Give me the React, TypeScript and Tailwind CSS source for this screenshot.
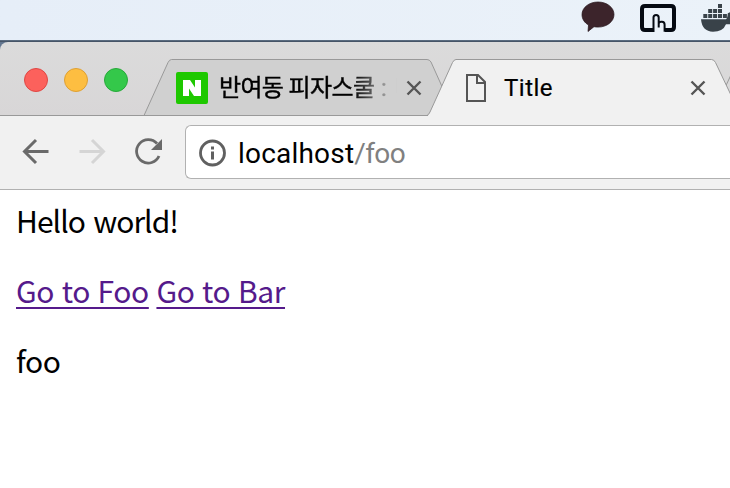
import React from "react";

function MenuBar() {
  return (
    <div className="flex h-10 shrink-0 justify-end bg-gradient-to-r from-[#e6eef8] to-[#ebf2f9]">
      <svg width="150" height="40" viewBox="580 0 150 40">
        <path d="M598 2c-9 0-16 5.600-16 12.500 0 4.600 2.600 8.300 6.500 10.500L588 31.500l6-4.800c1.300.3 2.600.4 4 .4 9 0 16-5.600 16-12.600S607 2 598 2z" fill="#3c242b" stroke="#241318" strokeWidth=".7" />
        <path d="M653 30h-8q-3 0-3-3V9q0-3 3-3h26q3 0 3 3v18q0 3-3 3h-6" fill="none" stroke="#050a12" strokeWidth="4" />
        <path d="M653.500 32V17.600q0-2.600 2.600-2.600t2.600 2.600v10M658.700 24v-.3q0-2 2.500-2h.8q2.600 0 2.600 3v7" fill="none" stroke="#050a12" strokeWidth="2" />
        <path d="M701 19.300h25q1.500-1 1.800-6l2.200-1v12h-4q-3 7.500-13 7.500-11-.5-12-12.500z" fill="#394249" />
        <g fill="#394249">
          <rect x="703.300" y="14" width="4" height="4" />
          <rect x="708.200" y="14" width="4" height="4" />
          <rect x="713.100" y="14" width="4" height="4" />
          <rect x="718" y="14" width="4" height="4" />
          <rect x="722.900" y="14" width="4" height="4" />
          <rect x="708.200" y="9" width="4" height="4" />
          <rect x="713.100" y="9" width="4" height="4" />
          <rect x="718" y="9" width="4" height="4" />
          <rect x="718" y="4" width="4" height="4" />
        </g>
      </svg>
    </div>
  );
}

function CloseIcon() {
  return (
    <svg width="16" height="16" viewBox="0 0 16 16" className="shrink-0">
      <path d="M1.500 1.500l13 13M14.500 1.500l-13 13" stroke="#555" strokeWidth="2.400" />
    </svg>
  );
}

function TabShapes() {
  return (
    <svg className="absolute left-0 top-0" width="730" height="74" viewBox="0 42 730 74">
      <path d="M718 115.500L740 70v45.500z" fill="#cfcfcf" />
      <path d="M726 85.500l8-17" stroke="#999" fill="none" />
      <path d="M144 115.500L168 62.500Q169.500 59.500 171.500 59.500H427Q429.500 59.500 431 62L455 115.500z" fill="#d0d0d0" stroke="#999" />
      <path d="M0 115.500H730" stroke="#999" />
      <path d="M428 116V115.500Q429 114.500 430 112L452.500 62.500Q454 59.500 456 59.500H711.500Q714 59.500 715.500 62.500L739.500 113V116z" fill="#f1f1f1" />
      <path d="M427 115.500Q428.500 115 430 112L452.500 62.500Q454 59.500 456 59.500H711.500Q714 59.500 715.500 62.500L739.500 113" fill="none" stroke="#999" />
    </svg>
  );
}

function TabStrip() {
  return (
    <div className="shrink-0 bg-[#61758f]">
      <div className="relative h-[74px] overflow-hidden rounded-tl-[8px] bg-gradient-to-b from-[#dbdbdb] to-[#d8d6d7]">
        <TabShapes />
        <div className="relative flex h-full items-center pl-6 pt-[3px] font-['Roboto','Noto_Sans_CJK_KR',sans-serif] text-[24px] text-black">
          <div className="flex w-[152px] shrink-0 gap-4 self-start pt-[23px]">
            <div className="size-6 rounded-full border border-[#df4744] bg-[#fc615c]" />
            <div className="size-6 rounded-full border border-[#dea034] bg-[#fdbe41]" />
            <div className="size-6 rounded-full border border-[#27a93a] bg-[#34c84a]" />
          </div>
          <div className="flex w-[290px] shrink-0 items-center pt-[15px]">
            <svg width="32" height="32" viewBox="0 0 32 32" className="shrink-0">
              <rect width="32" height="32" rx="2" fill="#1ec800" />
              <path d="M7 8h7l5 7.500V8h6v16h-7l-5-7.500V24H7z" fill="#fff" />
            </svg>
            <div className="ml-[11px] mb-[1px] w-[178px] overflow-hidden whitespace-nowrap leading-9 tracking-[-0.65px] [-webkit-text-stroke:0.4px_black] [mask-image:linear-gradient(to_right,black_75%,transparent)]">
              반여동 피자스쿨<span className="tracking-[0.8px]"> : </span>네
            </div>
            <div className="ml-[9px]"><CloseIcon /></div>
          </div>
          <div className="flex w-[240px] shrink-0 items-center pt-[15px]">
            <svg width="20" height="28" viewBox="0 0 20 28" className="shrink-0">
              <path d="M1 1h11l7 7v19H1zM11 1v8h8" fill="none" stroke="#555" strokeWidth="2" />
            </svg>
            <div className="mb-[1px] ml-[18px] w-[186px] leading-9 tracking-[0.5px] [-webkit-text-stroke:0.2px_black]">Title</div>
            <CloseIcon />
          </div>
        </div>
      </div>
    </div>
  );
}

function Toolbar() {
  return (
    <div className="flex h-[74px] shrink-0 items-center border-b border-[#b1b1b1] bg-[#f1f1f1]">
      <svg width="185" height="73" viewBox="0 116 185 73" className="shrink-0">
        <path d="M48.500 151.500H24.500M36 140L24.500 151.500L36 163" fill="none" stroke="#6a6a6a" strokeWidth="3" />
        <path d="M79.500 151.500H103.500M92 140L103.500 151.500L92 163" fill="none" stroke="#d5d5d5" strokeWidth="3" />
        <path d="M157 143.500A11.700 11.700 0 1 0 159 156" fill="none" stroke="#6a6a6a" strokeWidth="2.800" />
        <path d="M162 139v11h-11z" fill="#6a6a6a" />
      </svg>
      <div className="mb-[1px] flex h-[54px] grow items-center rounded-l-md border border-r-0 border-[#b1b1b1] bg-white pl-3">
        <svg width="28" height="28" viewBox="0 0 28 28" className="mt-[1px] shrink-0">
          <circle cx="14.500" cy="14" r="12" fill="none" stroke="#606060" strokeWidth="2.800" />
          <path d="M14.500 7.500v3M14.500 12.500v8" stroke="#606060" strokeWidth="3" />
        </svg>
        <div className="ml-3 mt-[3px] font-['Roboto',sans-serif] text-[28px] leading-9 tracking-[0.2px] text-black">
          localhost<span className="tracking-[-0.6px] text-[#808080]">/foo</span>
        </div>
      </div>
    </div>
  );
}

export default function App() {
  return (
    <div className="flex h-[488px] w-[730px] flex-col overflow-hidden bg-white">
      <MenuBar />
      <div className="h-[2px] shrink-0 bg-gradient-to-b from-[#64768b] to-[#3c4a5c]" />
      <TabStrip />
      <Toolbar />
      <main className="flex flex-col gap-8 whitespace-nowrap px-4 pt-[11px] font-['Noto_Sans_CJK_KR',sans-serif] text-[30px] leading-[38px] text-black">
        <p className="tracking-[-0.95px] [word-spacing:2.5px]">Hello world!</p>
        <p className="tracking-[-0.4px] text-[#551a8b] [word-spacing:1.3px]">
          <a className="underline decoration-2 underline-offset-4">Go to Foo</a>{" "}
          <a className="underline decoration-2 underline-offset-4">Go to Bar</a>
        </p>
        <p className="tracking-[-0.4px]">foo</p>
      </main>
    </div>
  );
}
